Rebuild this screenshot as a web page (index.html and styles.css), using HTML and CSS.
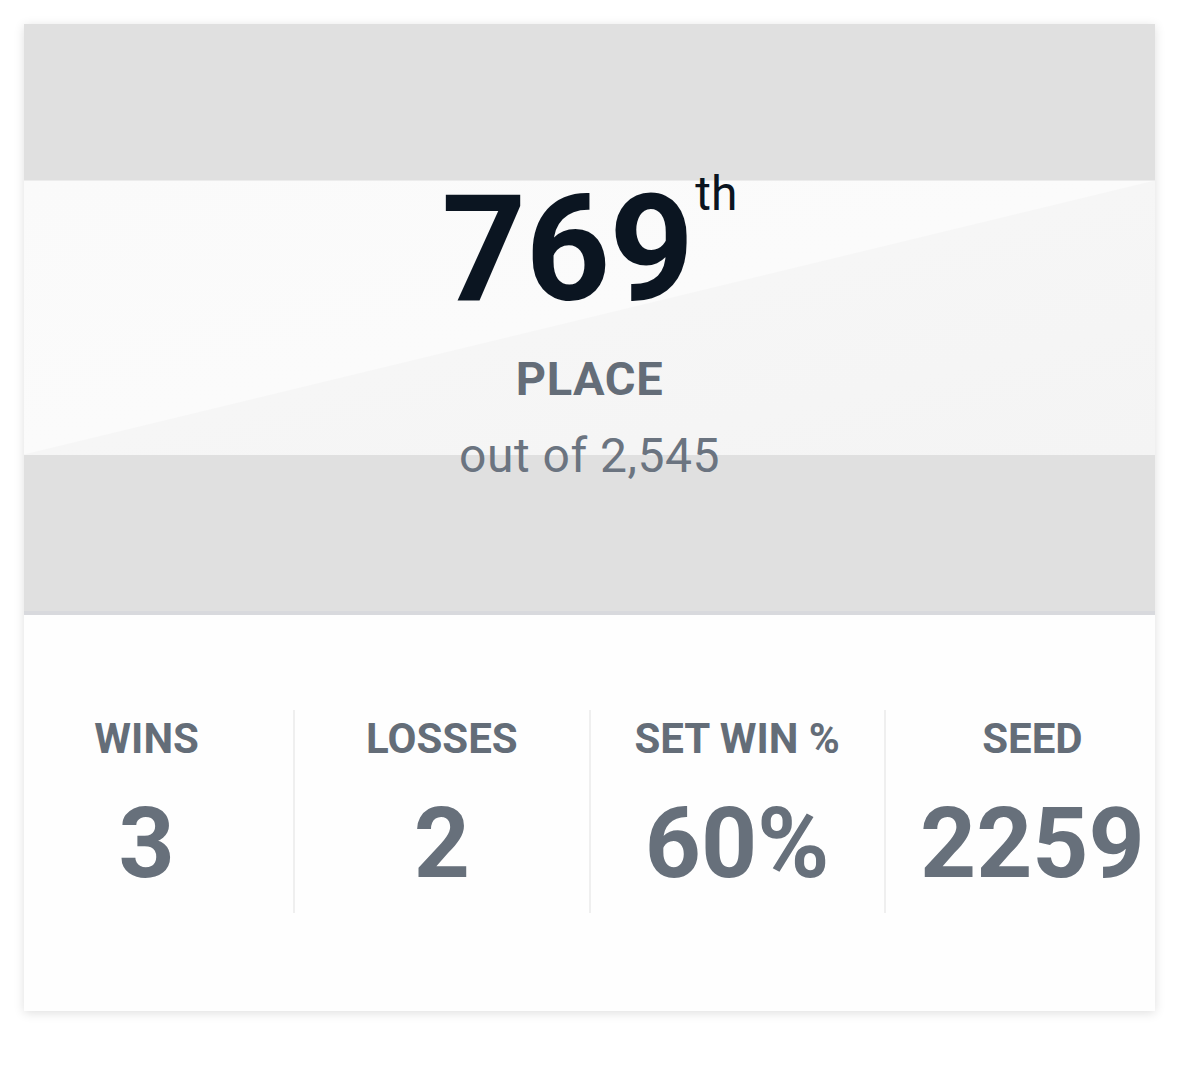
FILE: index.html
```html
<!DOCTYPE html>
<html lang="en">
<head>
<meta charset="utf-8">
<title>Placement</title>
<link rel="stylesheet" href="styles.css">
</head>
<body>
<div class="page">
  <div class="card">
    <div class="hero">
      <div class="band">
        <div class="rank">769<span class="ord">th</span></div>
        <div class="place">PLACE</div>
        <div class="outof">out of 2,545</div>
      </div>
    </div>
    <div class="stats">
      <div class="stat">
        <div class="label">WINS</div>
        <div class="value">3</div>
      </div>
      <div class="stat">
        <div class="label">LOSSES</div>
        <div class="value">2</div>
      </div>
      <div class="stat">
        <div class="label">SET WIN %</div>
        <div class="value">60%</div>
      </div>
      <div class="stat">
        <div class="label">SEED</div>
        <div class="value">2259</div>
      </div>
    </div>
  </div>
</div>
</body>
</html>
```

FILE: styles.css
```css
html, body {
  margin: 0;
  padding: 0;
  background: #ffffff;
}

body {
  font-family: Roboto, "Liberation Sans", Arial, sans-serif;
}

.page {
  padding: 24px;
}

.card {
  width: 1131px;
  height: 987px;
  background: #fefefe;
  box-shadow: 0 2px 10px rgba(0, 0, 0, 0.13);
}

.hero {
  height: 431px;
  padding-top: 156px;
  background: #e0e0e0;
  border-bottom: 4px solid #d8d9dd;
}

.band {
  height: 275px;
  background: linear-gradient(to bottom right, #fafafa 0%, #fbfbfb 49.8%, #f6f6f6 50%, #f4f4f4 100%);
  border-top: 1px solid #ececec;
  box-sizing: border-box;
  text-align: center;
}

.rank {
  margin-top: -1px;
  font-size: 148px;
  line-height: 140px;
  font-weight: 700;
  color: #0b1521;
  letter-spacing: -1px;
}

.ord {
  font-size: 48px;
  font-weight: 400;
  line-height: 0;
  vertical-align: 90px;
  margin-left: 2px;
  letter-spacing: 0;
}

.place {
  margin-top: 36px;
  font-size: 47px;
  line-height: 46px;
  font-weight: 700;
  letter-spacing: 0.6px;
  color: #646d78;
}

.outof {
  margin-top: 31px;
  font-size: 48px;
  line-height: 46px;
  font-weight: 400;
  letter-spacing: 0.5px;
  color: #6b7480;
}

.stats {
  display: flex;
  margin: 95px -24px 0 -24px;
}

.stat {
  flex: 1;
  height: 203px;
  text-align: center;
}

.stat + .stat {
  border-left: 2px solid #efefef;
}

.label {
  padding-top: 8px;
  font-size: 42px;
  line-height: 42px;
  font-weight: 700;
  color: #646d78;
}

.value {
  margin-top: 35px;
  font-size: 98px;
  line-height: 98px;
  font-weight: 700;
  color: #67707b;
}
```
